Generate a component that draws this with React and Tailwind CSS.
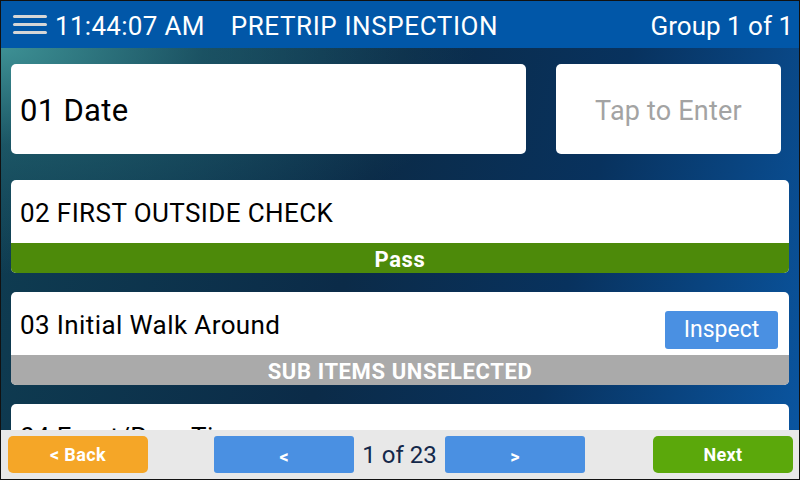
import React from "react";

function Card({ label, bar, barClass, action }) {
  return (
    <div className="shrink-0 overflow-hidden rounded-[5px] bg-white">
      <div className="flex h-[63px] items-center justify-between pl-[9px] pr-[11px]">
        <span className="pt-[3px] text-[26px] tracking-[0.4px] text-black">{label}</span>
        {action}
      </div>
      {bar && (
        <div className={`flex h-[30px] items-center justify-center pt-[3px] text-[22px] font-bold tracking-[0.6px] text-white ${barClass}`}>
          {bar}
        </div>
      )}
    </div>
  );
}

export default function App() {
  return (
    <div className="flex h-[480px] w-[800px] flex-col overflow-hidden border border-[#111] font-['Roboto',sans-serif]">
      <header className="flex h-[47px] shrink-0 items-center bg-[#0157a8] pl-[12px] pr-[6px] text-white">
        <div className="mr-[8px] flex flex-col gap-[5px]">
          <span className="block h-[3px] w-[34px] rounded-full bg-[#d6d6d6]" />
          <span className="block h-[3px] w-[34px] rounded-full bg-[#d6d6d6]" />
          <span className="block h-[3px] w-[34px] rounded-full bg-[#d6d6d6]" />
        </div>
        <span className="pt-[4px] text-[26px] tracking-[0.3px]">11:44:07 AM</span>
        <span className="ml-[26px] pt-[4px] text-[26px] tracking-[0.6px]">PRETRIP INSPECTION</span>
        <span className="ml-auto pt-[4px] text-[26px]">Group 1 of 1</span>
      </header>

      <main className="flex min-h-0 flex-1 flex-col overflow-hidden bg-[radial-gradient(ellipse_at_0%_0%,#3d9094_0%,rgba(40,110,120,0.5)_18%,transparent_42%),linear-gradient(105deg,#0f3e52_0%,#0b2b48_45%,#08325e_70%,#0a55a0_100%)] pl-[10px] pr-[10px] pt-[16px]">
        <div className="flex shrink-0 gap-[30px]">
          <div className="flex h-[90px] w-[515px] items-center rounded-[5px] bg-white pl-[9px]">
            <span className="pt-[4px] text-[31px] tracking-[0.3px] text-black">01 Date</span>
          </div>
          <div className="flex h-[90px] w-[225px] items-center justify-center rounded-[5px] bg-white">
            <span className="pt-[4px] text-[27px] tracking-[0.2px] text-[#a3a3a3]">Tap to Enter</span>
          </div>
        </div>
        <div className="mt-[26px] flex flex-col gap-[19px]">
          <Card label="02 FIRST OUTSIDE CHECK" bar="Pass" barClass="bg-[#4d8a0a]" />
          <Card
            label="03 Initial Walk Around"
            bar="SUB ITEMS UNSELECTED"
            barClass="bg-[#aaaaaa]"
            action={
              <button className="mt-[12px] h-[38px] w-[113px] rounded-[3px] bg-[#4a90e2] pt-[2px] text-[23px] text-white">
                Inspect
              </button>
            }
          />
          <Card label="04 Front/Rear Tires" />
        </div>
      </main>

      <footer className="flex h-[49px] shrink-0 items-center bg-[#e8e8e8] pl-[7px] pr-[6px]">
        <button className="h-[37px] w-[140px] rounded-[5px] bg-[#f5a627] text-[18px] font-bold tracking-[0.4px] text-white">
          &lt; Back
        </button>
        <button className="ml-[66px] h-[37px] w-[140px] rounded-[3px] bg-[#4a90e2] pt-[4px] text-[18px] font-bold text-white">
          &lt;
        </button>
        <span className="w-[91px] text-center text-[24px] text-[#14284a]">1 of 23</span>
        <button className="h-[37px] w-[140px] rounded-[3px] bg-[#4a90e2] pt-[4px] text-[18px] font-bold text-white">
          &gt;
        </button>
        <button className="ml-auto h-[37px] w-[140px] rounded-[5px] bg-[#5ba80b] text-[18px] font-bold tracking-[0.3px] text-white">
          Next
        </button>
      </footer>
    </div>
  );
}
